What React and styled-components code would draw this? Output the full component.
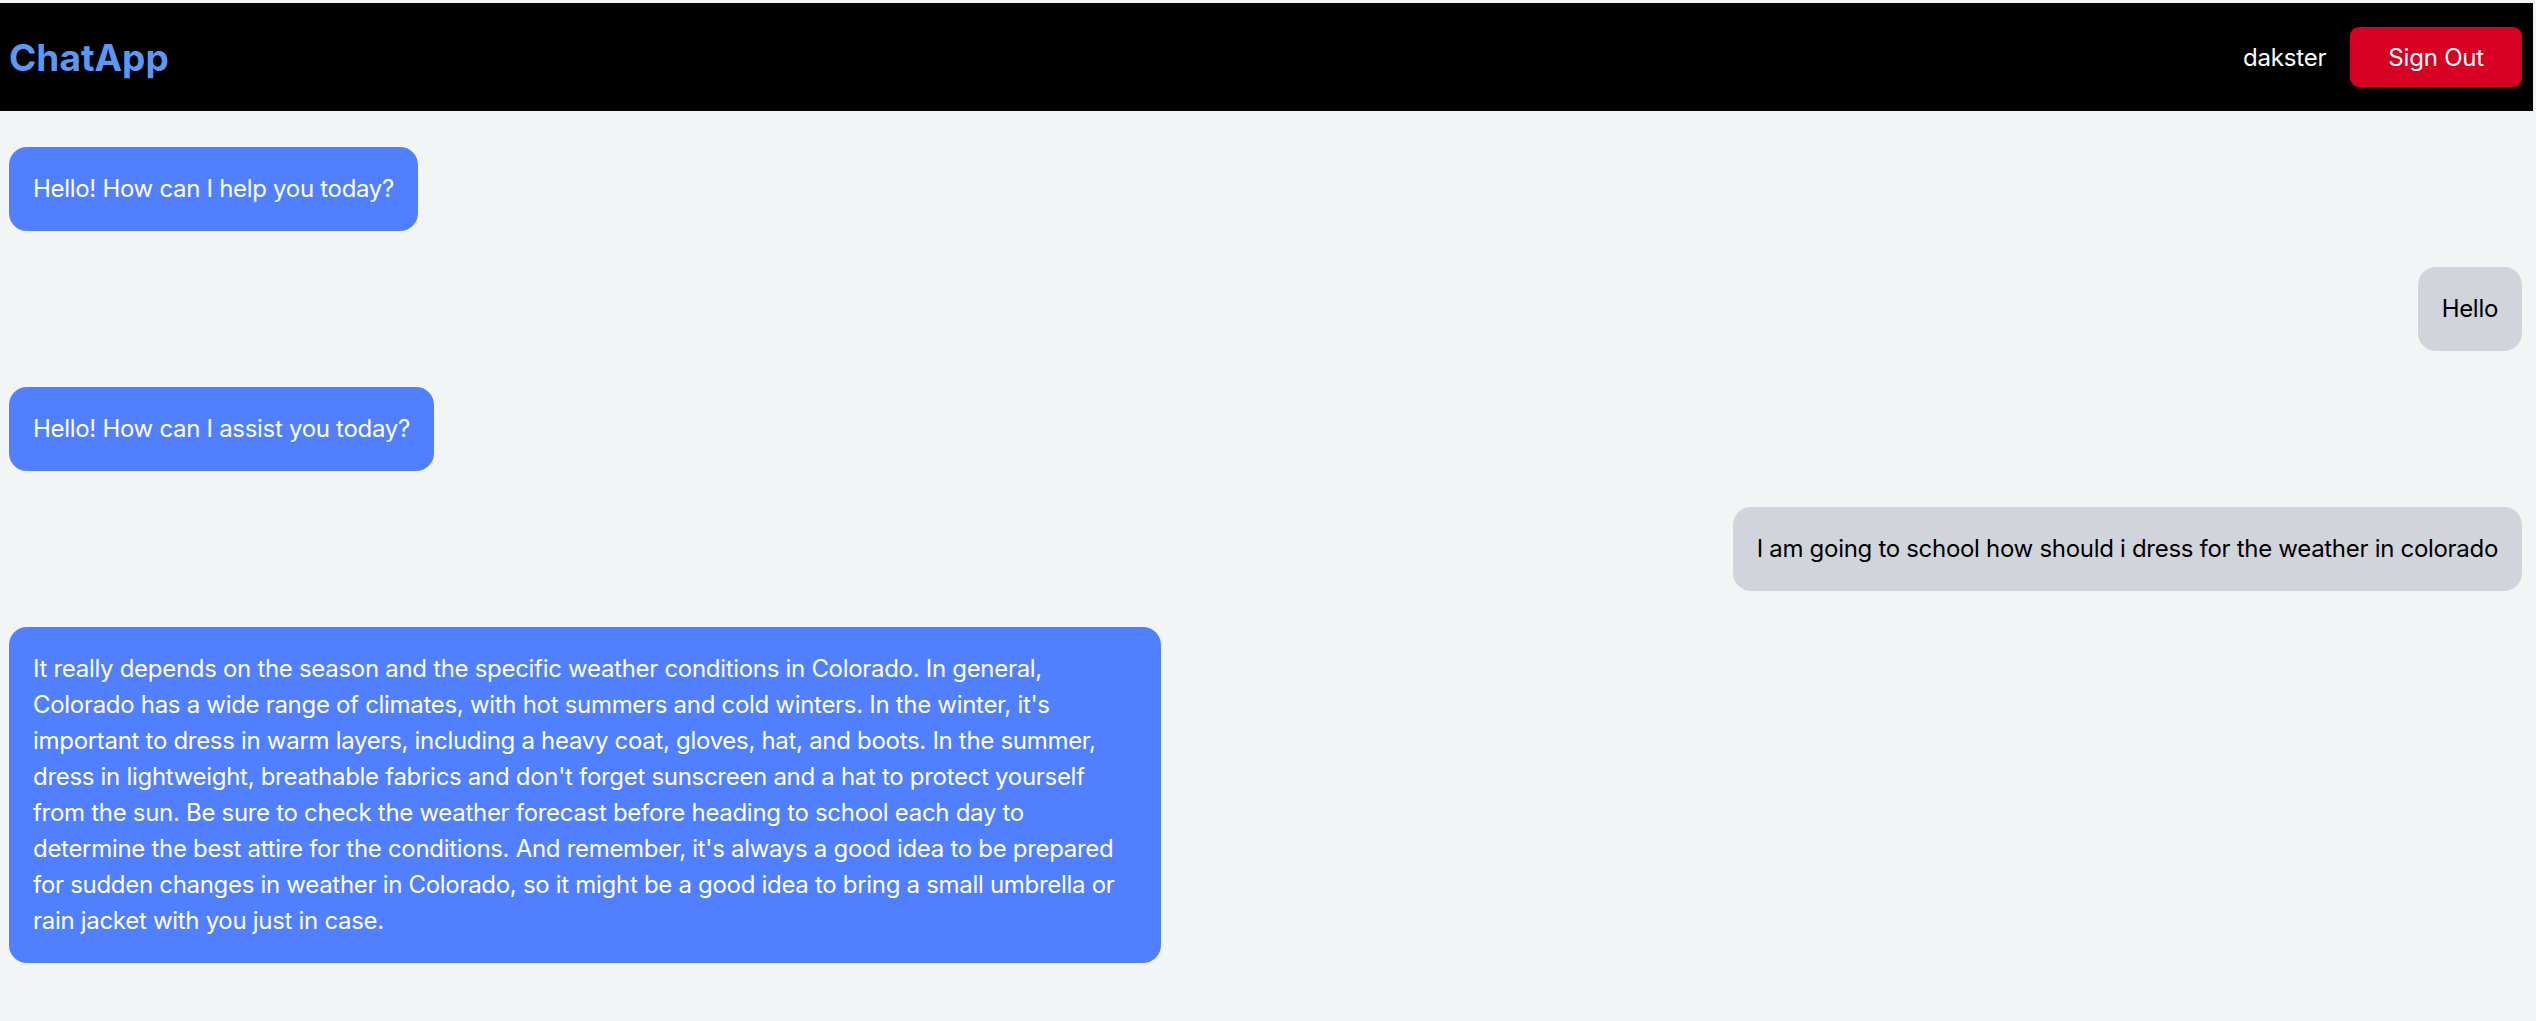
import styled, { createGlobalStyle } from 'styled-components'

const GlobalStyle = createGlobalStyle`
  html, body {
    margin: 0;
    padding: 0;
    background: #f3f4f6;
  }
  body {
    font-family: Inter, "Liberation Sans", sans-serif;
  }
  * {
    box-sizing: border-box;
  }
`

const messages = [
  { id: 1, from: 'bot', text: 'Hello! How can I help you today?' },
  { id: 2, from: 'user', text: 'Hello' },
  { id: 3, from: 'bot', text: 'Hello! How can I assist you today?' },
  { id: 4, from: 'user', text: 'I am going to school how should i dress for the weather in colorado' },
  {
    id: 5,
    from: 'bot',
    text: "It really depends on the season and the specific weather conditions in Colorado. In general, Colorado has a wide range of climates, with hot summers and cold winters. In the winter, it's important to dress in warm layers, including a heavy coat, gloves, hat, and boots. In the summer, dress in lightweight, breathable fabrics and don't forget sunscreen and a hat to protect yourself from the sun. Be sure to check the weather forecast before heading to school each day to determine the best attire for the conditions. And remember, it's always a good idea to be prepared for sudden changes in weather in Colorado, so it might be a good idea to bring a small umbrella or rain jacket with you just in case.",
  },
]

const Page = styled.div`
  width: 2533px;
  min-height: 1018px;
  margin-top: 3px;
  background: #f3f4f6;
`

const Header = styled.header`
  height: 108px;
  background: #000;
  display: flex;
  align-items: center;
  justify-content: space-between;
  padding: 0 11px 0 9px;
`

const Logo = styled.h1`
  margin: 0;
  font-size: 37px;
  font-weight: 700;
  color: #5b97f7;
`

const UserArea = styled.div`
  display: flex;
  align-items: center;
  gap: 24px;
`

const UserName = styled.span`
  font-size: 24px;
  letter-spacing: -0.2px;
  color: #fff;
`

const SignOutButton = styled.button`
  height: 60px;
  padding: 0 38px;
  border: 0;
  border-radius: 9px;
  background: #d70022;
  color: #fff;
  font-family: inherit;
  font-size: 24px;
  letter-spacing: -0.2px;
  cursor: pointer;
`

const MessageList = styled.main`
  display: flex;
  flex-direction: column;
  gap: 36px;
  padding: 36px 11px 36px 9px;
`

const Bubble = styled.div`
  align-self: ${p => (p.$mine ? 'flex-end' : 'flex-start')};
  max-width: 1152px;
  padding: 24px;
  border-radius: 18px;
  background: ${p => (p.$mine ? '#d1d5db' : '#5080ff')};
  color: ${p => (p.$mine ? '#000' : '#fff')};
  font-size: 24px;
  line-height: 36px;
  letter-spacing: -0.3px;
`

const App = () => {
  return (
    <>
      <GlobalStyle />
      <Page>
        <Header>
          <Logo>ChatApp</Logo>
          <UserArea>
            <UserName>dakster</UserName>
            <SignOutButton>Sign Out</SignOutButton>
          </UserArea>
        </Header>
        <MessageList>
          {messages.map(m => (
            <Bubble key={m.id} $mine={m.from === 'user'}>
              {m.text}
            </Bubble>
          ))}
        </MessageList>
      </Page>
    </>
  )
}

export default App
